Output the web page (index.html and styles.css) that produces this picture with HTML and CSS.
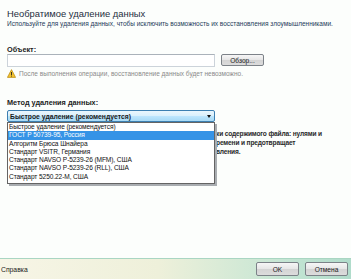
FILE: index.html
```html
<!DOCTYPE html>
<html>
<head>
    <meta charset="UTF-8">
    <title>Необратимое удаление данных</title>
    <link rel="stylesheet" href="styles.css">
</head>
<body>
    <div class="dialog">
        <div class="content">
            <h1 class="title">Необратимое удаление данных</h1>
            <p class="subtitle">Используйте для удаления данных, чтобы исключить возможность их восстановления злоумышленниками.</p>

            <div class="section object-section">
                <label class="field-label" for="path">Объект:</label>
                <div class="file-row">
                    <input type="text" id="path" class="path-input">
                    <button class="btn browse-btn">Обзор...</button>
                </div>
                <div class="warning">
                    <svg class="warn-icon" width="9" height="9" viewBox="0 0 9 9">
                        <path d="M4.5 0.6 L8.6 8.4 L0.4 8.4 Z" fill="#f2c230" stroke="#b8860b" stroke-width="0.7" stroke-linejoin="round"/>
                        <rect x="4.05" y="3" width="0.9" height="3" fill="#222"/>
                        <rect x="4.05" y="6.6" width="0.9" height="0.9" fill="#222"/>
                    </svg>
                    <span>После выполнения операции, восстановление данных будет невозможно.</span>
                </div>
            </div>

            <div class="section method-section">
                <label class="field-label">Метод удаления данных:</label>
                <div class="select-wrap">
                    <div class="select">
                        <span>Быстрое удаление (рекомендуется)</span>
                        <span class="arrow"></span>
                    </div>
                    <ul class="dropdown">
                        <li>Быстрое удаление (рекомендуется)</li>
                        <li class="active">ГОСТ Р 50739-95, Россия</li>
                        <li>Алгоритм Брюса Шнайера</li>
                        <li>Стандарт VSITR, Германия</li>
                        <li>Стандарт NAVSO P-5239-26 (MFM), США</li>
                        <li>Стандарт NAVSO P-5239-26 (RLL), США</li>
                        <li>Стандарт 5250.22-M, США</li>
                    </ul>
                </div>
                <!-- остаток описания, который не закрыт выпадающим списком -->
                <p class="method-desc">ки содержимого файла: нулями и<br>ремени и предотвращает<br>вления.</p>
            </div>
        </div>

        <div class="footer">
            <span class="help">Справка</span>
            <div class="footer-buttons">
                <button class="btn footer-btn">OK</button>
                <button class="btn footer-btn">Отмена</button>
            </div>
        </div>
    </div>
</body>
</html>
```

FILE: styles.css
```css
html, body {
    height: 100%;
}

body {
    margin: 0;
    background: #fcfefc;
    font-family: "Liberation Sans", Arial, sans-serif;
    font-size: 6.5px;
    color: #1a1a1a;
}

.dialog {
    display: flex;
    flex-direction: column;
    height: 100%;
}

.content {
    flex: 1;
    padding: 7px 7px 0 7px;
}

.title {
    margin: 0;
    font-size: 9.4px;
    font-weight: normal;
    line-height: 13px;
    color: #1e2e3e;
}

.subtitle {
    margin: 0;
    line-height: 8px;
    white-space: nowrap;
    color: #243c5a;
}

.section {
    margin-top: 17px;
}

.field-label {
    display: block;
    font-weight: bold;
    font-size: 7.3px;
    line-height: 9px;
    color: #222;
}

.file-row {
    display: flex;
    align-items: flex-start;
    gap: 6px;
    margin-top: 0;
}

.path-input {
    width: 208px;
    height: 13px;
    margin: 0;
    padding: 0 2px;
    border: 1px solid #ccd3da;
    border-top-color: #aab2ba;
    box-sizing: border-box;
    background: #fff;
    font-size: 7px;
}

.btn {
    margin: 0;
    padding: 0;
    border: 1px solid #7c8288;
    border-radius: 2px;
    background: linear-gradient(#f6f6f6, #e6e6e6 50%, #d4d4d4 51%, #dcdcdc);
    font-family: inherit;
    font-size: 6.6px;
    color: #1a1a1a;
    box-sizing: border-box;
}

.browse-btn {
    width: 43px;
    height: 12px;
}

.warning {
    display: flex;
    align-items: center;
    gap: 3px;
    margin-top: 2px;
    color: #8a8a8a;
}

.warn-icon {
    flex: none;
}

.method-section {
    margin-top: 20px;
}

.select-wrap {
    position: relative;
    width: 208px;
    margin-top: 3px;
}

.select {
    display: flex;
    align-items: center;
    justify-content: space-between;
    height: 12px;
    padding: 0 2px;
    border: 1px solid #3c7fb1;
    border-radius: 2px;
    box-sizing: border-box;
    background: linear-gradient(#eaf6fd, #d9f0fc 50%, #bee6fd 51%, #a7d9f5);
    font-weight: bold;
    font-size: 6.8px;
    color: #1a1a1a;
}

.arrow {
    width: 0;
    height: 0;
    margin-right: 1px;
    border-left: 2.5px solid transparent;
    border-right: 2.5px solid transparent;
    border-top: 3px solid #111;
}

.dropdown {
    position: absolute;
    top: 12px;
    left: 0;
    width: 208px;
    margin: 0;
    padding: 0 0 2px;
    list-style: none;
    background: #fff;
    border: 1px solid #646464;
    box-sizing: border-box;
    box-shadow: 2px 2px 0 #a9adb1;
    z-index: 2;
}

.dropdown li {
    height: 8.3px;
    line-height: 8.3px;
    padding: 0 1px;
    font-size: 6.6px;
    letter-spacing: -0.1px;
    color: #111;
    white-space: nowrap;
}

.dropdown li.active {
    background: #3593e6;
    color: #fff;
}

.method-desc {
    margin: 7px 0 0 209px;
    line-height: 9px;
    font-weight: bold;
    font-size: 6.6px;
    letter-spacing: -0.15px;
    color: #2a2a2a;
    white-space: nowrap;
}

.footer {
    display: flex;
    align-items: center;
    justify-content: space-between;
    height: 20px;
    padding: 0 3px 0 1px;
    border-top: 1px solid #a9d6c2;
    background: linear-gradient(to right, #f7f5e6, #eef0da 45%, #c6e6d4 80%, #b0dccb);
}

.help {
    font-size: 6.8px;
    color: #1a1a1a;
}

.footer-buttons {
    display: flex;
    gap: 6px;
}

.footer-btn {
    width: 43px;
    height: 14px;
}
```
